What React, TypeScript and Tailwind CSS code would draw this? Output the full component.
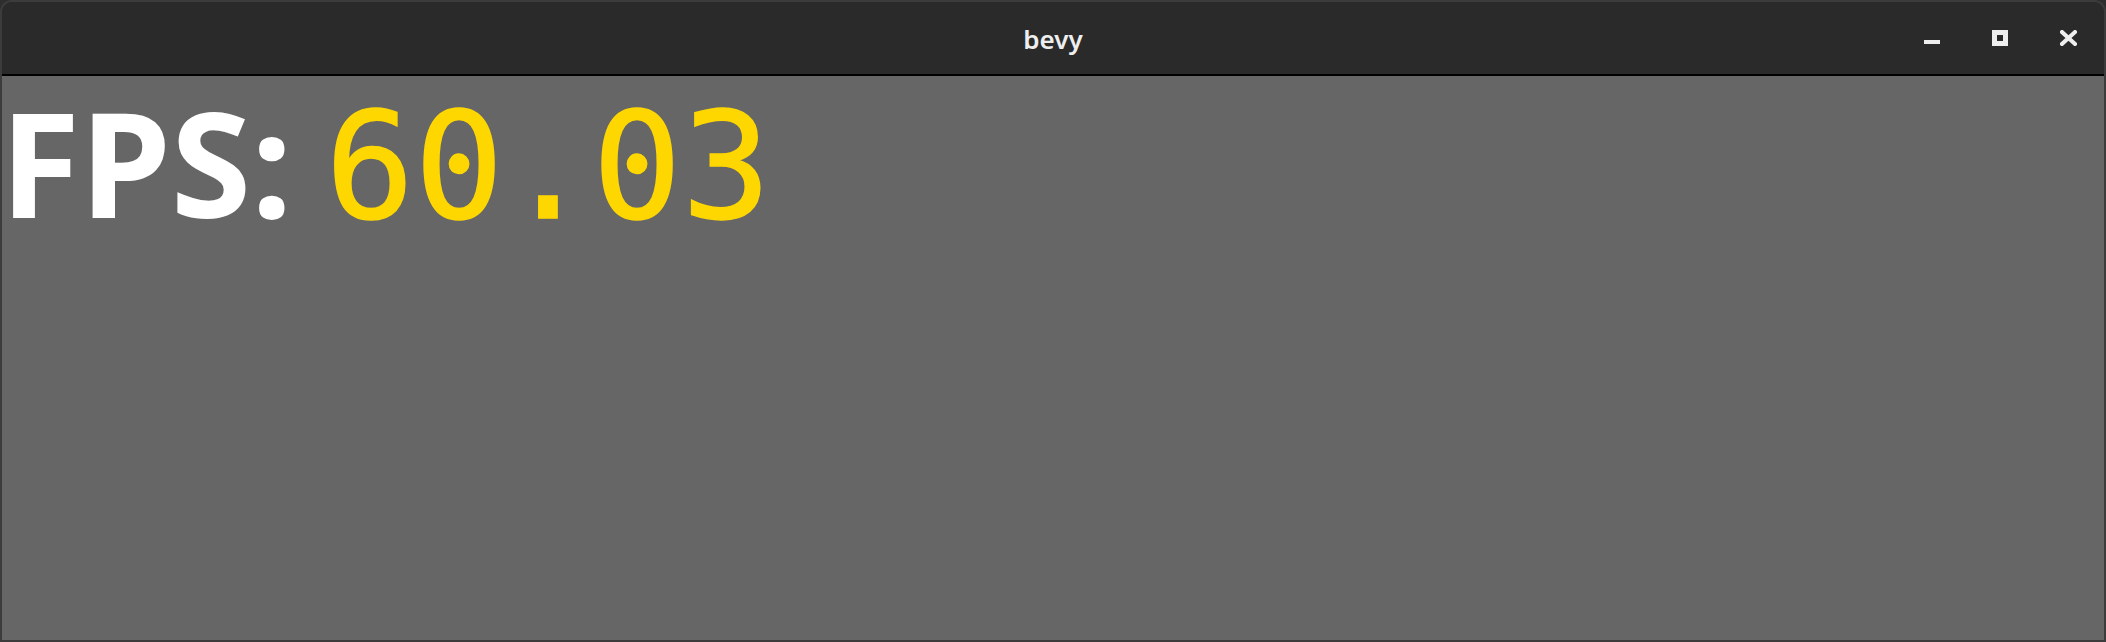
export default function App() {
  return (
    <div className="h-[642px] w-[2106px] bg-[#2e2e2e]">
      <div className="flex h-full flex-col overflow-hidden rounded-t-[12px] border-2 border-[#3c3c3c]">
        <div className="grid h-[72px] grid-cols-[1fr_auto_1fr] items-center bg-[#2a2a2a]">
          <div />
          <span className="pt-[2px] text-[26px] font-semibold text-[#eeeeee] [font-family:'Noto_Sans',sans-serif]">
            bevy
          </span>
          <div className="flex h-full items-center justify-end pr-[2px]">
            <div className="flex h-full w-[68px] items-center justify-center">
              <div className="mt-[8px] h-[4px] w-[16px] bg-[#eeeeee]" />
            </div>
            <div className="flex h-full w-[68px] items-center justify-center">
              <div className="h-[16px] w-[16px] border-[5px] border-[#eeeeee]" />
            </div>
            <div className="flex h-full w-[68px] items-center justify-center">
              <svg width="17" height="16" viewBox="0 0 17 16">
                <path d="M2 2 L15 14 M15 2 L2 14" stroke="#eeeeee" strokeWidth="4" strokeLinecap="square" />
              </svg>
            </div>
          </div>
        </div>
        <div className="h-[2px] bg-black" />
        <div className="flex-1 bg-[#666666]">
          <div className="flex items-baseline pt-[13px] leading-none">
            <span className="-ml-[2px] text-[146px] font-bold text-white [font-family:'Noto_Sans',sans-serif]">
              FPS:
            </span>
            <span className="ml-[33px] text-[148px] text-[#ffd700] [-webkit-text-stroke:1.5px_#ffd700] [font-family:'DejaVu_Sans_Mono',monospace]">
              60.03
            </span>
          </div>
        </div>
      </div>
    </div>
  );
}
